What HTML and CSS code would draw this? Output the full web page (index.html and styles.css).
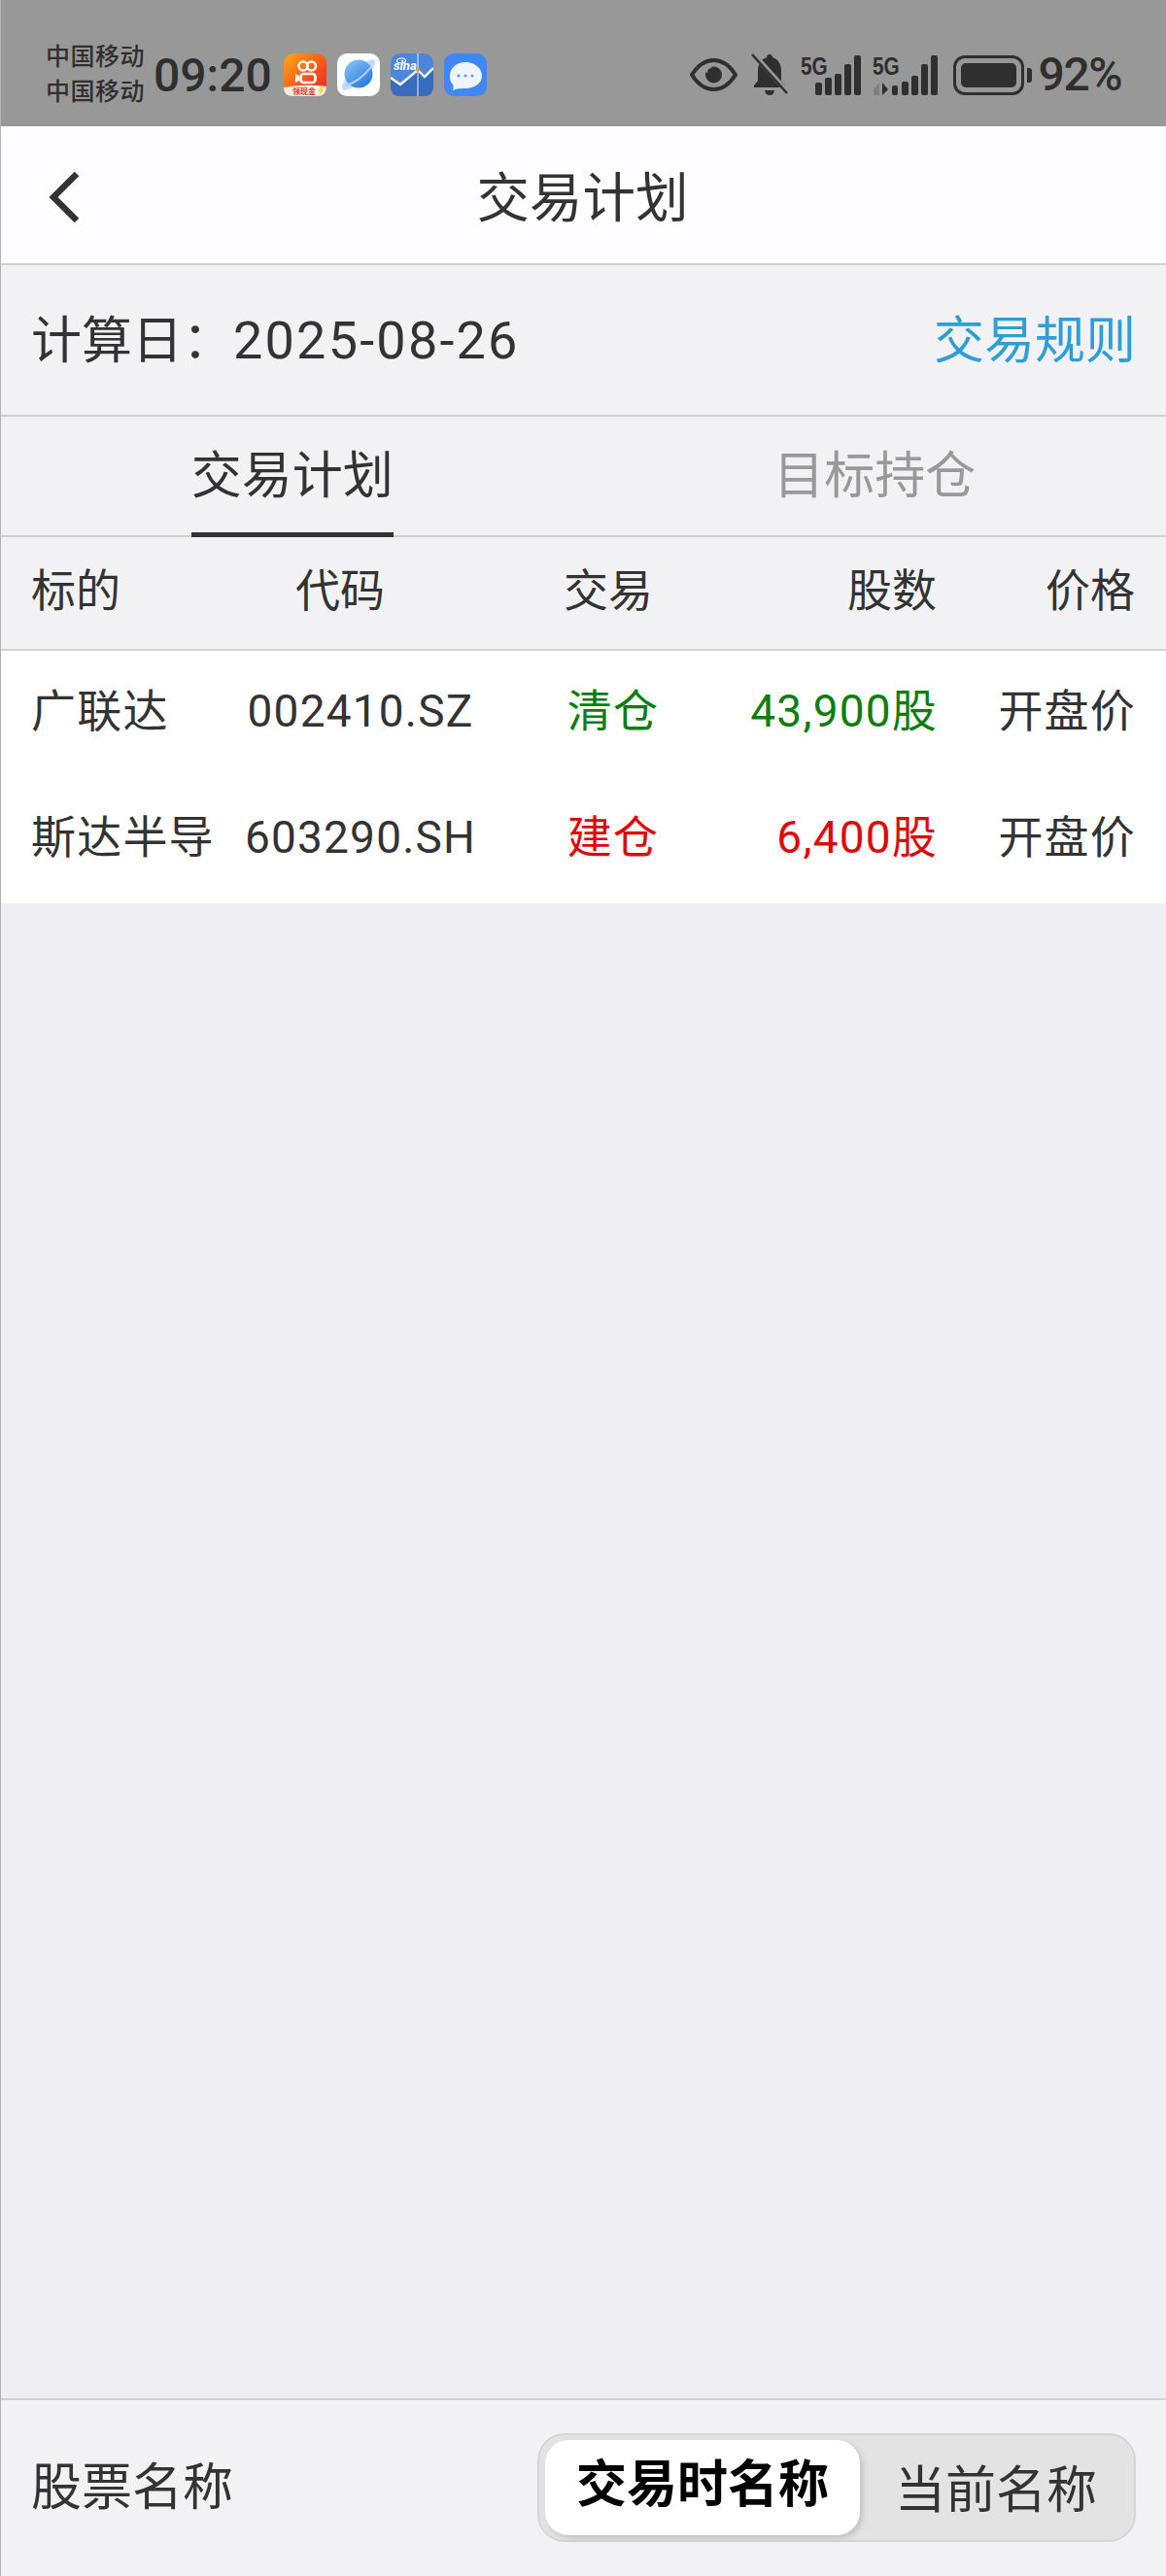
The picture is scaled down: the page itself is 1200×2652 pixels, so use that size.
FILE: index.html
```html
<!DOCTYPE html>
<html lang="zh-CN">
  <head>
    <meta charset="UTF-8" />
    <title>交易计划</title>
    <meta name="viewport" content="width=device-width, initial-scale=1" />
    <link rel="stylesheet" href="styles.css">
  </head>
  <body>
    <div class="page">
      <div class="status">
        <div class="status__carrier">
          <span>中国移动</span>
          <span>中国移动</span>
        </div>
        <div class="status__time">09:20</div>
        <div class="status__apps">
          <svg class="app" viewBox="0 0 44 44">
            <defs>
              <linearGradient id="ks" x1="0" y1="0" x2="1" y2="1">
                <stop offset="0" stop-color="#fdab14" />
                <stop offset="0.6" stop-color="#f6501f" />
                <stop offset="1" stop-color="#e8202c" />
              </linearGradient>
            </defs>
            <rect width="44" height="44" rx="10" fill="url(#ks)" />
            <path d="M0 35 Q22 31 44 34 V34 Q44 44 34 44 H10 Q0 44 0 35Z" fill="#fdf0df" />
            <circle cx="20" cy="13" r="4.500" fill="none" stroke="#fff" stroke-width="2.600" />
            <circle cx="28.500" cy="13" r="4.500" fill="none" stroke="#fff" stroke-width="2.600" />
            <rect x="17.500" y="21" width="15" height="9" rx="3" fill="none" stroke="#fff" stroke-width="2.600" />
            <path d="M16 23 L12 21 V30 L16 28Z" fill="#fff" />
            <text class="app__tag" x="21" y="42" text-anchor="middle">领现金</text>
            <path d="M39 33 L35 39 H38 L36 43 L42 37 H39 L41 33Z" fill="#fbd24a" />
          </svg>
          <svg class="app" viewBox="0 0 44 44">
            <defs>
              <linearGradient id="planet" x1="0.2" y1="0.1" x2="0.8" y2="0.9">
                <stop offset="0" stop-color="#7dbdf2" />
                <stop offset="1" stop-color="#2a7be0" />
              </linearGradient>
            </defs>
            <rect width="44" height="44" rx="10" fill="#fff" />
            <ellipse cx="22" cy="22" rx="22" ry="7" transform="rotate(-42 22 22)" fill="#c4dbf8" />
            <circle cx="22" cy="21" r="14.500" fill="url(#planet)" />
            <path d="M8 33 Q22 30 35 14" fill="none" stroke="#a9cdf5" stroke-width="2" />
          </svg>
          <svg class="app" viewBox="0 0 44 44">
            <rect width="44" height="44" rx="10" fill="#4a86dc" />
            <path d="M0 25 L10 32 L28 17 L35 24 L44 15 V34 Q44 44 34 44 H10 Q0 44 0 34Z" fill="#3a6cbd" />
            <path d="M0 25 L10 32 L28 17 L35 24 L44 15" fill="none" stroke="#fff" stroke-width="2.400" />
            <path d="M28 0 V44" stroke="#e8eefa" stroke-width="1" />
            <circle cx="28" cy="17" r="2" fill="#e89a3a" />
            <text class="app__sina" x="3" y="17">sina</text>
            <ellipse cx="11" cy="7.500" rx="4.500" ry="2.500" fill="none" stroke="#fff" stroke-width="1.200" />
          </svg>
          <svg class="app" viewBox="0 0 44 44">
            <rect width="44" height="44" rx="10" fill="#3f87f5" />
            <path d="M22 9 C31 9 39 15 39 23 C39 31 31 36 22 36 C18 36 14 36 9 38 C9.500 36 10 34 9 32 C6 29 6 26 6 23 C6 15 13 9 22 9Z" fill="#eef5fe" />
            <circle cx="15" cy="23" r="1.600" fill="#6b9de8" />
            <circle cx="22" cy="23" r="1.600" fill="#6b9de8" />
            <circle cx="29" cy="23" r="1.600" fill="#6b9de8" />
          </svg>
        </div>
        <div class="status__right">
          <svg class="icon-eye" viewBox="0 0 49 34">
            <path d="M2 17 C9 6 16 2 24.500 2 C33 2 40 6 47 17 C40 28 33 32 24.500 32 C16 32 9 28 2 17Z" fill="none" stroke="#2f2f2f" stroke-width="4" />
            <circle cx="24.500" cy="17" r="8.500" fill="#2f2f2f" />
            <circle cx="22" cy="14" r="4.500" fill="none" stroke="#989898" stroke-width="1.500" stroke-dasharray="8 20" transform="rotate(170 22 14)" />
          </svg>
          <svg class="icon-bell" viewBox="0 0 38 46">
            <path d="M19 2 C21 2 22 3.500 22 5 C28 7 31 12 31 19 V29 L35 34 V36 H3 V34 L7 29 V19 C7 12 10 7 16 5 C16 3.500 17 2 19 2Z" fill="#2f2f2f" />
            <path d="M14 39 H24 C23.500 42 22 44 19 44 C16 44 14.500 42 14 39Z" fill="#2f2f2f" />
            <path d="M1 0 L37 40" stroke="#989898" stroke-width="5" />
            <path d="M1 2 L37 42" stroke="#2f2f2f" stroke-width="2.500" />
          </svg>
          <div class="signal">
            <span class="signal__type">5G</span>
            <svg class="signal__bars" viewBox="0 0 62 42">
              <rect x="15" y="29" width="7" height="13" rx="2" />
              <rect x="25" y="24" width="7" height="18" rx="2" />
              <rect x="35" y="20" width="7" height="22" rx="2" />
              <rect x="45" y="10" width="7" height="32" rx="2" />
              <rect x="55" y="1" width="7" height="41" rx="2" />
            </svg>
          </div>
          <div class="signal signal--second">
            <span class="signal__type">5G</span>
            <svg class="signal__bars" viewBox="0 0 67 42">
              <path d="M7 29 V42 H1 V36Z" fill="#7f7f7f" />
              <path d="M10 29 V42 L16 36Z" />
              <rect x="20" y="32" width="6" height="10" rx="2" />
              <rect x="30" y="28" width="7" height="14" rx="2" />
              <rect x="40" y="22" width="7" height="20" rx="2" />
              <rect x="50" y="10" width="7" height="32" rx="2" />
              <rect x="60" y="1" width="7" height="41" rx="2" />
            </svg>
          </div>
          <div class="battery">
            <div class="battery__shell">
              <div class="battery__level"></div>
            </div>
            <div class="battery__nub"></div>
          </div>
          <div class="status__percent">92%</div>
        </div>
      </div>

      <header class="nav">
        <svg class="nav__back" viewBox="0 0 40 60">
          <path d="M33 6 L9 30 L33 54" fill="none" stroke="#333" stroke-width="6.500" stroke-linejoin="miter" />
        </svg>
        <h1 class="nav__title">交易计划</h1>
      </header>

      <div class="info">
        <div class="info__date">计算日&#65306;<span class="info__value">2025-08-26</span></div>
        <a class="info__link">交易规则</a>
      </div>

      <div class="tabs">
        <div class="tabs__item">
          <span class="tabs__label tabs__label--active">交易计划</span>
        </div>
        <div class="tabs__item">
          <span class="tabs__label">目标持仓</span>
        </div>
      </div>

      <div class="table-head">
        <div>标的</div>
        <div class="cell--center">代码</div>
        <div class="cell--center">交易</div>
        <div class="cell--right">股数</div>
        <div class="cell--right">价格</div>
      </div>

      <div class="rows">
        <div class="row">
          <div>广联达</div>
          <div class="cell--center">002410.SZ</div>
          <div class="cell--center cell--sell">清仓</div>
          <div class="cell--right cell--sell">43,900股</div>
          <div class="cell--right">开盘价</div>
        </div>
        <div class="row">
          <div>斯达半导</div>
          <div class="cell--center">603290.SH</div>
          <div class="cell--center cell--buy">建仓</div>
          <div class="cell--right cell--buy">6,400股</div>
          <div class="cell--right">开盘价</div>
        </div>
      </div>

      <main class="blank"></main>

      <footer class="footer">
        <div class="footer__label">股票名称</div>
        <div class="toggle">
          <div class="toggle__item toggle__item--active">交易时名称</div>
          <div class="toggle__item toggle__item--plain">当前名称</div>
        </div>
      </footer>
    </div>
  </body>
</html>
```

FILE: styles.css
```css
:root {
  --color-text: #333;
  --color-status: #2f2f2f;
  --color-line: #d0d0d2;
  --color-panel: #f2f2f5;
}

*,
*::before,
*::after {
  box-sizing: border-box;
}

body {
  margin: 0;
  font-family: Roboto, "Noto Sans CJK SC", sans-serif;
  color: var(--color-text);
}

.page {
  display: flex;
  flex-direction: column;
  height: 100vh;
  border-left: 1px solid #b4b4b8;
  background-color: #eeeef3;
}

/* Status bar */
.status {
  flex-shrink: 0;
  display: flex;
  align-items: center;
  height: 130px;
  padding: 24px 46px 0 46px;
  background-color: #989898;
  color: var(--color-status);
}

.status__carrier {
  display: flex;
  flex-direction: column;
  font-size: 25px;
  font-weight: 500;
  line-height: 36px;
  letter-spacing: 0.5px;
  white-space: nowrap;
}

.status__time {
  margin-left: 9px;
  font-size: 48px;
  font-weight: 500;
}

.status__apps {
  display: flex;
  gap: 11px;
  margin-left: 12px;
}

.app {
  display: block;
  width: 44px;
  height: 44px;
}

.app__tag {
  font-size: 8px;
  font-weight: 700;
  fill: #d9352b;
}

.app__sina {
  font-size: 13px;
  font-style: italic;
  font-weight: 700;
  fill: #fff;
}

.status__right {
  display: flex;
  align-items: center;
  margin-left: auto;
}

.icon-eye {
  width: 49px;
  height: 34px;
}

.icon-bell {
  width: 38px;
  height: 46px;
  margin-left: 14px;
}

.signal {
  position: relative;
  width: 62px;
  height: 42px;
  margin-left: 13px;
}

.signal--second {
  width: 67px;
  margin-left: 12px;
}

.signal__type {
  position: absolute;
  top: -1px;
  left: 0;
  font-family: "Liberation Sans", sans-serif;
  font-size: 26px;
  font-weight: 700;
  line-height: 1;
  transform: scaleX(0.8);
  transform-origin: left top;
}

.signal__bars {
  display: block;
  width: 100%;
  height: 100%;
  fill: var(--color-status);
}

.battery {
  display: flex;
  align-items: center;
  margin-left: 16px;
}

.battery__shell {
  width: 73px;
  height: 41px;
  padding: 5px;
  border: 3px solid var(--color-status);
  border-radius: 12px;
}

.battery__level {
  width: 100%;
  height: 100%;
  border-radius: 5px;
  background-color: var(--color-status);
}

.battery__nub {
  width: 5px;
  height: 15px;
  margin-left: 3px;
  border-radius: 0 3px 3px 0;
  background-color: var(--color-status);
}

.status__percent {
  margin-left: 7px;
  font-size: 48px;
  font-weight: 500;
  line-height: 1;
  letter-spacing: -1.5px;
}

/* Nav */
.nav {
  flex-shrink: 0;
  position: relative;
  display: flex;
  align-items: center;
  justify-content: center;
  height: 143px;
  padding: 0 2px 2px 0;
  border-bottom: 2px solid var(--color-line);
  background-color: #fdfcff;
}

.nav__back {
  position: absolute;
  top: 43px;
  left: 45px;
  width: 40px;
  height: 60px;
}

.nav__title {
  margin: 0;
  font-size: 54.500px;
  font-weight: 400;
}

/* Date line */
.info {
  flex-shrink: 0;
  display: flex;
  align-items: center;
  justify-content: space-between;
  height: 156px;
  padding: 0 31px 8px 31px;
  border-bottom: 2px solid var(--color-line);
  background-color: var(--color-panel);
  font-size: 52px;
}

.info__value {
  font-size: 54px;
  letter-spacing: 2.200px;
}

.info__link {
  color: #2e9fd4;
}

/* Tabs */
.tabs {
  flex-shrink: 0;
  display: flex;
  height: 124px;
  border-bottom: 2px solid var(--color-line);
  background-color: var(--color-panel);
  font-size: 52px;
}

.tabs__item {
  flex: 1;
  display: flex;
  justify-content: center;
}

.tabs__label {
  display: flex;
  align-items: center;
  justify-content: center;
  width: 208px;
  height: 126px;
  padding-bottom: 6px;
  border-bottom: 7px solid transparent;
  color: #999;
}

.tabs__label--active {
  border-bottom-color: var(--color-text);
  color: var(--color-text);
}

/* Table */
.table-head,
.row {
  display: grid;
  align-items: center;
  font-size: 46px;
  line-height: 1.3;
  white-space: nowrap;
}

.table-head {
  flex-shrink: 0;
  grid-template-columns: 158px 320px 232px 222px 1fr;
  height: 117px;
  padding: 0 32px 4px 31px;
  border-bottom: 2px solid var(--color-line);
  background-color: var(--color-panel);
}

.rows {
  flex-shrink: 0;
  background-color: #fff;
}

.row {
  grid-template-columns: 189px 300px 220px 224px 1fr;
  height: 130px;
  padding: 0 31px 5px 31px;
  letter-spacing: 1.200px;
}

.cell--center {
  text-align: center;
}

.cell--right {
  text-align: right;
}

.cell--sell {
  color: #0d7d0d;
}

.cell--buy {
  color: #dd0808;
}

.blank {
  flex: 1 1 auto;
}

/* Footer */
.footer {
  flex-shrink: 0;
  display: flex;
  align-items: center;
  justify-content: space-between;
  height: 183px;
  padding: 0 31px 2px 31px;
  border-top: 2px solid var(--color-line);
  background-color: var(--color-panel);
}

.footer__label {
  padding-bottom: 8px;
  font-size: 52px;
}

.toggle {
  display: flex;
  align-items: center;
  width: 616px;
  height: 112px;
  padding: 5px 6px;
  border: 2px solid #d6d6d8;
  border-radius: 28px;
  background-color: #e3e3e3;
  font-size: 52px;
}

.toggle__item {
  flex: 1;
  text-align: center;
}

.toggle__item--plain {
  padding: 0 0 2px 4px;
}

.toggle__item--active {
  flex: 0 0 324px;
  height: 98px;
  line-height: 94px;
  border-radius: 24px;
  background-color: #fff;
  box-shadow: 3px 3px 6px rgba(0, 0, 0, 0.15);
  font-weight: 700;
  color: #000;
}
```
